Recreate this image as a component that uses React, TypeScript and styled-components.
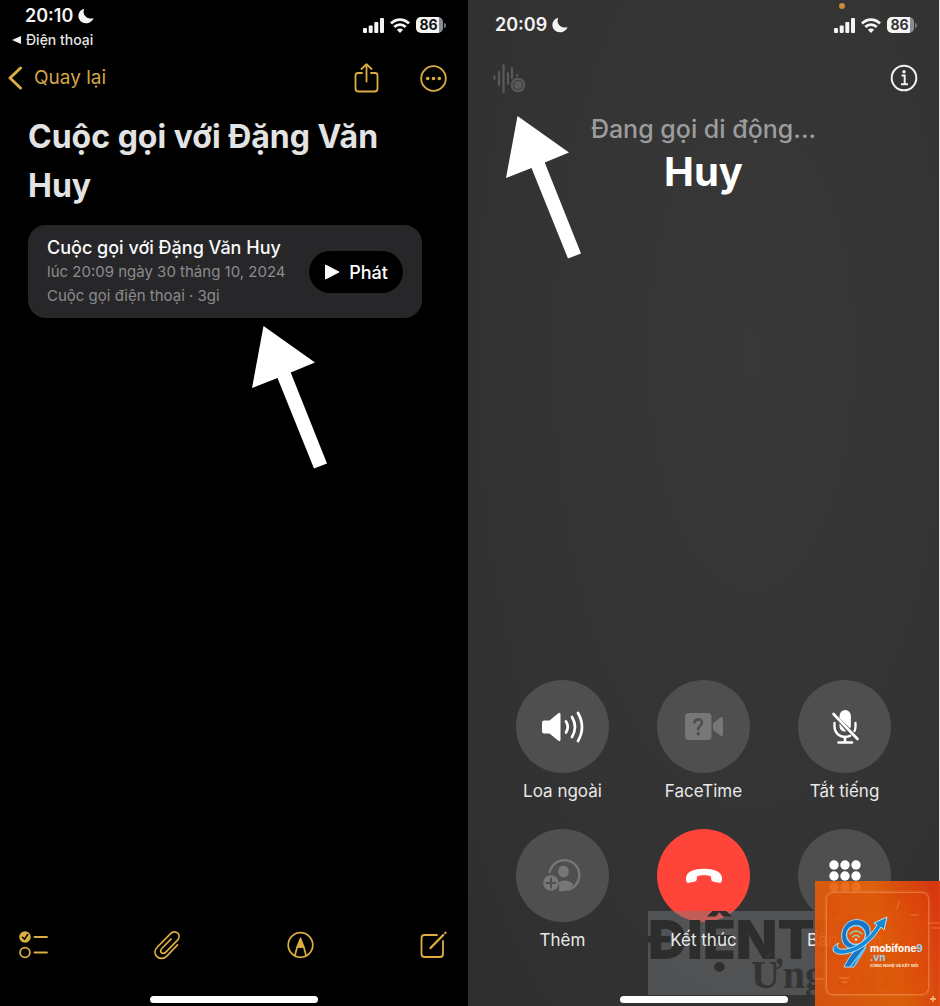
import React from "react";
import styled, { createGlobalStyle } from "styled-components";

const gold = "#dcae42";

const GlobalStyle = createGlobalStyle`
  * { box-sizing: border-box; }
  body { margin: 0; background: #e4e4e4; }
  h1, h2, p { margin: 0; }
  button { border: 0; padding: 0; background: none; font: inherit; color: inherit; cursor: pointer; }
  svg { display: block; flex: none; }
`;

const Page = styled.div`
  display: grid;
  grid-template-columns: 468fr 471fr;
  min-height: 100vh;
  padding-right: 1px;
  font-family: Inter, "Liberation Sans", sans-serif;
  color: #fff;
`;

const Screen = styled.main<{ $call?: boolean }>`
  position: relative;
  display: flex;
  flex-direction: column;
  min-width: 0;
  padding-bottom: 3px;
  background: ${(p) =>
    p.$call
      ? "radial-gradient(ellipse at 60% 35%, #383838 0%, #343434 50%, #2f2f2f 100%)"
      : "#000"};
`;

const StatusBar = styled.header<{ $inset: number }>`
  display: flex;
  justify-content: space-between;
  height: 50px;
  padding: 0 22px 0 ${(p) => p.$inset}px;
`;

const ClockColumn = styled.div<{ $top: number }>`
  display: flex;
  flex-direction: column;
  padding-top: ${(p) => p.$top}px;
`;

const Clock = styled.div<{ $inset: number }>`
  display: flex;
  align-items: center;
  gap: 5px;
  padding-left: ${(p) => p.$inset}px;
  font-size: 18px;
  line-height: 24px;
  font-weight: 600;
  color: #f2f2f2;
`;

const ReturnLink = styled.a`
  display: flex;
  align-items: center;
  gap: 5px;
  font-size: 14px;
  line-height: 24px;
  font-weight: 500;
  color: #e6e6e6;
  text-decoration: none;
`;

const Indicators = styled.div`
  display: flex;
  align-items: center;
  gap: 6px;
  height: 50px;
`;

const Battery = styled.span`
  display: flex;
  align-items: center;
  gap: 1px;
  &::after {
    content: "";
    width: 2px;
    height: 5px;
    border-radius: 0 2px 2px 0;
    background: #777;
  }
`;

const BatteryLevel = styled.span<{ $ink: string }>`
  width: 27px;
  height: 16px;
  padding-right: 2px;
  border-radius: 5px;
  background: linear-gradient(to right, #f4f4f4 86%, #8d8d8d 86%);
  color: ${(p) => p.$ink};
  font-size: 14px;
  line-height: 16px;
  font-weight: 700;
  text-align: center;
`;

const MicDot = styled.span`
  position: absolute;
  top: 3px;
  right: 94px;
  width: 6px;
  height: 6px;
  border-radius: 50%;
  background: #c98a3a;
`;

const NavBar = styled.nav<{ $left: number }>`
  display: flex;
  align-items: center;
  justify-content: space-between;
  height: 56px;
  padding: 0 21px 0 ${(p) => p.$left}px;
`;

const BackButton = styled.button`
  display: flex;
  align-items: center;
  gap: 11px;
  color: #d3a646;
  font-size: 19px;
  line-height: 28px;
`;

const Actions = styled.div`
  display: flex;
  align-items: center;
  gap: 41px;
`;

const IconButton = styled.button`
  position: relative;
  display: flex;
`;

const Note = styled.article`
  padding: 6px 46px 0 28px;
`;

const NoteTitle = styled.h1`
  font-size: 32px;
  line-height: 49px;
  font-weight: 700;
  color: #e3e3e3;
`;

const Recording = styled.section`
  position: relative;
  display: flex;
  align-items: center;
  justify-content: space-between;
  margin-top: 15px;
  padding: 11px 19px 10px;
  border-radius: 18px;
  background: #272729;
`;

const RecordingTitle = styled.h2`
  font-size: 18px;
  line-height: 24px;
  font-weight: 500;
  color: #fafafa;
  white-space: nowrap;
`;

const RecordingMeta = styled.p`
  font-size: 15px;
  line-height: 24px;
  color: #8b8b8e;
  white-space: nowrap;
`;

const PlayButton = styled.button`
  display: flex;
  flex: none;
  align-items: center;
  justify-content: center;
  gap: 9px;
  width: 94px;
  height: 42px;
  border-radius: 21px;
  background: #000;
  font-size: 18px;
  font-weight: 500;
`;

const ArrowSvg = styled.svg<{ $left: number; $top: number }>`
  position: absolute;
  left: ${(p) => p.$left}px;
  top: ${(p) => p.$top}px;
  pointer-events: none;
`;

const Toolbar = styled.footer`
  display: flex;
  align-items: center;
  justify-content: space-between;
  margin-top: auto;
  margin-bottom: 36px;
  padding: 0 21px 0 19px;
`;

const HomeBar = styled.div`
  position: relative;
  z-index: 2;
  align-self: center;
  width: 168px;
  height: 7px;
  border-radius: 4px;
  background: #fff;
`;

const Caller = styled.section`
  padding-top: 5px;
  text-align: center;
`;

const CallState = styled.p`
  font-size: 25px;
  line-height: 36px;
  font-weight: 500;
  color: #9c9c9c;
`;

const CallerName = styled.h1`
  font-size: 40px;
  line-height: 50px;
  font-weight: 700;
`;

const Controls = styled.section`
  display: grid;
  grid-template-columns: repeat(3, 93px);
  justify-content: space-between;
  row-gap: 26px;
  margin: auto 0 44px;
  padding: 0 48px;
`;

const Control = styled.button`
  display: flex;
  flex-direction: column;
  align-items: center;
  gap: 6px;
`;

const Disc = styled.span<{ $danger?: boolean }>`
  display: flex;
  align-items: center;
  justify-content: center;
  width: 93px;
  height: 93px;
  border-radius: 50%;
  background: ${(p) => (p.$danger ? "#ff453a" : "#4f4f4f")};
`;

const ControlLabel = styled.span`
  position: relative;
  z-index: 2;
  font-size: 17px;
  line-height: 24px;
  color: #e8e8e8;
  white-space: nowrap;
`;

const Watermark = styled.aside`
  position: absolute;
  right: 0;
  bottom: 11px;
  width: 291px;
  height: 84px;
  overflow: hidden;
  background: rgba(120, 122, 124, 0.45);
  color: #2d2d2d;
  white-space: nowrap;
`;

const WatermarkName = styled.div`
  font-size: 54px;
  line-height: 58px;
  font-weight: 900;
`;

const WatermarkTopic = styled.div`
  margin-top: -16px;
  padding-left: 103px;
  font-family: "Liberation Serif", serif;
  font-size: 40px;
  line-height: 44px;
  font-weight: 700;
  color: #333;
`;

const Sponsor = styled.aside`
  position: absolute;
  z-index: 3;
  right: -1px;
  bottom: 0;
  width: 125px;
  height: 125px;
  padding: 11px;
  background: linear-gradient(75deg, rgba(224, 84, 14, 0.93), rgba(234, 100, 4, 0.9) 55%, rgba(222, 56, 14, 0.96) 95%);
`;

const SponsorFrame = styled.div`
  height: 103px;
  padding: 51px 0 0 43px;
  border: 1px solid rgba(255, 180, 120, 0.4);
  border-radius: 7px;
  background: rgba(230, 74, 8, 0.3);
  box-shadow: 0 0 3px rgba(255, 190, 130, 0.4);
  white-space: nowrap;
`;

const SponsorName = styled.div`
  font-size: 10px;
  line-height: 9px;
  font-weight: 700;
  color: #fff;
`;

const Tint = styled.span`
  color: #9fd4f2;
`;

const SponsorTagline = styled.div`
  font-size: 4px;
  line-height: 7px;
  font-weight: 700;
  color: #ffe9da;
`;

const SponsorArt = styled.svg`
  position: absolute;
  left: 0;
  top: 0;
`;

const Moon = () => (
  <svg width="16" height="16" viewBox="0 0 16 16" fill="#f4f4f4" aria-hidden="true">
    <path d="M6.200 .8C2.700 1.800 .4 4.700 .4 8.100C.4 12.200 3.800 15.300 8 15.300C11.500 15.300 14.500 13.200 15.600 10C9.500 12.200 3.600 7.200 6.200 .8Z" />
  </svg>
);

const PointerArrow = ({ left, top }: { left: number; top: number }) => (
  <ArrowSvg $left={left} $top={top} width="76" height="143" viewBox="0 0 76 143" aria-hidden="true">
    <path d="M11.500 0L63 36.500L38.700 46.500L75 137.500L62 142.500L25.500 52L0 62Z" fill="#fff" />
  </ArrowSvg>
);

const SystemIndicators = ({ ink }: { ink: string }) => (
  <Indicators>
    <svg width="21" height="15" viewBox="0 0 21 15" fill="#f4f4f4" aria-hidden="true">
      <rect x="0" y="10" width="4" height="5" rx="1" />
      <rect x="5.700" y="7.500" width="4" height="7.500" rx="1" />
      <rect x="11.300" y="4" width="4" height="11" rx="1" />
      <rect x="17" y="0" width="4" height="15" rx="1" />
    </svg>
    <svg width="20" height="15" viewBox="0 0 20 15" aria-hidden="true">
      <g fill="none" stroke="#f4f4f4" strokeWidth="2.800">
        <path d="M1 5.500C6 .2 14 .2 19 5.500" />
        <path d="M4.300 9C7.500 5.700 12.500 5.700 15.700 9" />
      </g>
      <path d="M10 15L6.900 11.700C8.700 10 11.300 10 13.100 11.700Z" fill="#f4f4f4" />
    </svg>
    <Battery>
      <BatteryLevel $ink={ink}>86</BatteryLevel>
    </Battery>
  </Indicators>
);

const NotesScreen = () => (
  <Screen>
    <StatusBar $inset={12}>
      <ClockColumn $top={4}>
        <Clock $inset={13}>
          20:10 <Moon />
        </Clock>
        <ReturnLink href="#phone">
          <svg width="9" height="8" viewBox="0 0 9 8" fill="#f0f0f0" aria-hidden="true">
            <path d="M0 4L9 0V8Z" />
          </svg>
          Điện thoại
        </ReturnLink>
      </ClockColumn>
      <SystemIndicators ink="#111" />
    </StatusBar>
    <NavBar $left={8}>
      <BackButton>
        <svg width="15" height="24" viewBox="0 0 15 24" fill="none" stroke={gold} strokeWidth="3" strokeLinecap="round" strokeLinejoin="round" aria-hidden="true">
          <path d="M12.500 2L2 12L12.500 22" />
        </svg>
        Quay lại
      </BackButton>
      <Actions>
        <IconButton aria-label="Chia sẻ">
          <svg width="25" height="30" viewBox="0 0 25 30" fill="none" stroke={gold} strokeWidth="1.800" strokeLinecap="round" strokeLinejoin="round">
            <path d="M8 10H4Q1.500 10 1.500 12.500V25.500Q1.500 28.500 4.500 28.500H20.500Q23.500 28.500 23.500 25.500V12.500Q23.500 10 21 10H17" />
            <path d="M12.500 18.500V1.500M7.500 6L12.500 1.200L17.500 6" />
          </svg>
        </IconButton>
        <IconButton aria-label="Tùy chọn khác">
          <svg width="27" height="27" viewBox="0 0 27 27" fill="none" stroke={gold} strokeWidth="1.800">
            <circle cx="13.500" cy="13.500" r="12.300" />
            <g fill={gold} stroke="none">
              <circle cx="7.700" cy="13.500" r="1.800" />
              <circle cx="13.500" cy="13.500" r="1.800" />
              <circle cx="19.300" cy="13.500" r="1.800" />
            </g>
          </svg>
        </IconButton>
      </Actions>
    </NavBar>
    <Note>
      <NoteTitle>Cuộc gọi với Đặng Văn Huy</NoteTitle>
      <Recording>
        <div>
          <RecordingTitle>Cuộc gọi với Đặng Văn Huy</RecordingTitle>
          <RecordingMeta>lúc 20:09 ngày 30 tháng 10, 2024</RecordingMeta>
          <RecordingMeta>Cuộc gọi điện thoại · 3gi</RecordingMeta>
        </div>
        <PlayButton>
          <svg width="16" height="16" viewBox="0 0 16 16" fill="#fff" stroke="#fff" strokeWidth="1" strokeLinejoin="round" aria-hidden="true">
            <path d="M1.500 1L15 8L1.500 15Z" />
          </svg>
          Phát
        </PlayButton>
        <PointerArrow left={224} top={101} />
      </Recording>
    </Note>
    <Toolbar>
      <IconButton aria-label="Danh sách kiểm">
        <svg width="29" height="30" viewBox="0 0 29 30" fill="none" stroke={gold} strokeWidth="1.800" strokeLinecap="round">
          <circle cx="6" cy="7" r="5.800" fill={gold} stroke="none" />
          <path d="M3.500 7.200L5.500 9.200L8.700 4.500" stroke="#000" strokeWidth="1.500" />
          <circle cx="6" cy="22.500" r="4.900" />
          <path d="M15.500 7H28M15.500 22.500H28" />
        </svg>
      </IconButton>
      <IconButton aria-label="Đính kèm">
        <svg width="26" height="30" viewBox="0 0 26 30" fill="none" stroke={gold} strokeWidth="1.700" strokeLinecap="round">
          <path d="M23.500 14.800L13 25.800C9.800 29.200 5.200 29.200 2.700 26.400C.2 23.600 .7 19.800 3.400 17L16.600 3.600C18.800 1.400 21.900 1.300 23.800 3.200C25.700 5.100 25.500 8 23.500 10.100L11.600 22.300C10.300 23.600 8.500 23.700 7.400 22.600C6.300 21.500 6.500 19.800 7.800 18.500L17 9.100" />
        </svg>
      </IconButton>
      <IconButton aria-label="Đánh dấu">
        <svg width="27" height="28" viewBox="0 0 27 28" fill="none" stroke={gold} strokeWidth="1.700" strokeLinejoin="round">
          <circle cx="13.500" cy="14" r="12.300" />
          <path d="M7.800 25L10.200 16H16.800L19.200 25" />
          <path d="M10.200 16L13.500 7.500L16.800 16Z" fill={gold} />
        </svg>
      </IconButton>
      <IconButton aria-label="Ghi chú mới">
        <svg width="27" height="28" viewBox="0 0 27 28" fill="none" stroke={gold} strokeWidth="1.800" strokeLinecap="round">
          <path d="M17 4H4.500Q1.500 4 1.500 7V23Q1.500 26 4.500 26H20Q23 26 23 23V10" />
          <path d="M10.500 17L23.300 4" strokeWidth="2.300" />
          <path d="M25.300 2L25.500 1.800" strokeWidth="2.300" />
        </svg>
      </IconButton>
    </Toolbar>
    <HomeBar />
  </Screen>
);

const SpeakerIcon = () => (
  <svg width="44" height="34" viewBox="0 0 44 34" aria-hidden="true">
    <path d="M1 12.500Q1 10.500 3 10.500H8.500L17 3.500Q19.500 1.800 19.500 4.500V29.500Q19.500 32.200 17 30.500L8.500 23.500H3Q1 23.500 1 21.500Z" fill="#fff" />
    <g fill="none" stroke="#fff" strokeWidth="2.700" strokeLinecap="round">
      <path d="M25 11.500Q28.500 17 25 22.500" />
      <path d="M31 7Q37 17 31 27" />
      <path d="M37 3Q45 17 37 31" />
    </g>
  </svg>
);

const FaceTimeIcon = () => (
  <svg width="40" height="27" viewBox="0 0 40 27" aria-hidden="true">
    <rect x="1" y="0" width="26.500" height="27" rx="4" fill="#777" />
    <path d="M29 10.500L36.500 4.500Q39 3 39 5.500V21.500Q39 24 36.500 22.500L29 17Z" fill="#777" />
    <path d="M10.500 9.500C11 5.500 18 5 18 9.700C18 13 14.200 12.700 14.200 16.500" fill="none" stroke="#4f4f4f" strokeWidth="2.600" strokeLinecap="round" />
    <circle cx="14.200" cy="20.800" r="1.700" fill="#4f4f4f" />
  </svg>
);

const MutedIcon = () => (
  <svg width="30" height="36" viewBox="0 0 30 36" fill="none" stroke="#fff" strokeWidth="2.300" strokeLinecap="round" aria-hidden="true">
    <path d="M9.500 7A5.700 6 0 0 1 20.900 7V17Q20.900 18.500 20 19.300L9.500 9Z" fill="#fff" stroke="none" />
    <path d="M9.500 14.500V17C9.500 21 12.700 23.300 16.300 22.300Z" fill="#fff" stroke="none" />
    <path d="M4.500 14V17.500C4.500 24 9.300 28 15 28C17 28 18.700 27.500 20.200 26.700M25.500 14V17.500Q25.500 20 24.500 22" />
    <path d="M15 28V33M8.500 33.500H22" strokeWidth="2.600" />
    <path d="M3.500 5L27.500 30" strokeWidth="2.600" />
  </svg>
);

const AddPersonIcon = () => (
  <svg width="40" height="34" viewBox="2.500 0 40 34" aria-hidden="true">
    <path d="M9 14A15 15 0 1 1 26 31" fill="none" stroke="#777" strokeWidth="2.300" />
    <ellipse cx="23" cy="12.500" rx="5.300" ry="6" fill="#777" />
    <path d="M18 32C19 29.500 19 26 18 23.500C21 20.500 29 20.500 33 25.500C29.500 31 23 33 18 32Z" fill="#777" />
    <circle cx="10.500" cy="24" r="7.800" fill="#777" />
    <path d="M10.500 19.500V28.500M6 24H15" stroke="#4f4f4f" strokeWidth="2" strokeLinecap="round" />
  </svg>
);

const HangUpIcon = () => (
  <svg width="38" height="16" viewBox="0 0 38 16" fill="#fff" aria-hidden="true">
    <path d="M1 10.500C1 3.500 9.500 .8 19 .8C28.500 .8 37 3.500 37 10.500C37 14 36.500 15 34 14.700L28.500 13.700C26.800 13.300 26.400 12.500 26.200 11L26 8.500C23.500 6.800 14.500 6.800 12 8.500L11.800 11C11.600 12.500 11.200 13.300 9.500 13.700L4 14.700C1.500 15 1 14 1 10.500Z" />
  </svg>
);

const KeypadIcon = () => (
  <svg width="32" height="32" viewBox="0 0 32 32" fill="#fff" aria-hidden="true">
    {[5, 16, 27].map((y) => [5, 16, 27].map((x) => <circle key={`${x}-${y}`} cx={x} cy={y} r="4.700" />))}
  </svg>
);

const controls = [
  { label: "Loa ngoài", icon: <SpeakerIcon /> },
  { label: "FaceTime", icon: <FaceTimeIcon /> },
  { label: "Tắt tiếng", icon: <MutedIcon /> },
  { label: "Thêm", icon: <AddPersonIcon /> },
  { label: "Kết thúc", icon: <HangUpIcon />, danger: true },
  { label: "Bàn phím", icon: <KeypadIcon /> },
];

const SponsorBadge = () => (
  <Sponsor>
    <SponsorArt width="125" height="125" viewBox="0 0 125 125" aria-hidden="true">
      <g stroke="#ff9a4a" strokeLinecap="round" opacity=".6">
        <path d="M96 34H103M113 42H124M117 47H125M24 97H34M27 101H32M0 98H9M82 28L84 20" />
      </g>
      <path d="M118 115V121M115 118H121" stroke="#ffc09a" strokeWidth="1.300" />
      <path d="M55 48C57 58 47 70 39 86H29C33 77 39 70 43 67C31 70 25 62 27 51C29 42 37 37 45 39C50 40 54 43 55 48Z" fill="#1674c4" stroke="#a8dcf5" strokeWidth="1" />
      <path d="M48 69L35 86M51 66L40 84" stroke="#6cc3f0" strokeWidth="1.500" />
      <circle cx="41" cy="54" r="9.500" fill="#e9540f" stroke="#8fd4f5" strokeWidth="1.500" />
      <g fill="none" stroke="#8fd4a8" strokeWidth="1.300" strokeLinecap="round">
        <path d="M35 53Q41 47 47 53M37.500 56Q41 52.500 44.500 56" />
      </g>
      <circle cx="41" cy="58.500" r="1.300" fill="#bff0dc" />
      <path d="M24 62C14 66 17 75 30 73C46 71 59 58 66 46L69 49L72 36L59 42L62 44C54 57 43 66 31 68C23 69 20 66 24 62Z" fill="#168ad4" stroke="#b5e4f8" strokeWidth="1" strokeLinejoin="round" />
    </SponsorArt>
    <SponsorFrame>
      <SponsorName>
        mobifone<Tint>9</Tint>
      </SponsorName>
      <SponsorName>
        <Tint>.vn</Tint>
      </SponsorName>
      <SponsorTagline>CÔNG NGHỆ VÀ KẾT NỐI</SponsorTagline>
    </SponsorFrame>
  </Sponsor>
);

const CallScreen = () => (
  <Screen $call>
    <MicDot />
    <StatusBar $inset={27}>
      <ClockColumn $top={13}>
        <Clock $inset={0}>
          20:09 <Moon />
        </Clock>
      </ClockColumn>
      <SystemIndicators ink="#333" />
    </StatusBar>
    <NavBar $left={25}>
      <IconButton aria-label="Ghi âm cuộc gọi">
        <svg width="34" height="30" viewBox="0 -4 34 30" fill="none" stroke="#595959" strokeWidth="2.200" strokeLinecap="round">
          <path d="M1.500 9V12M6 5V18M10.500 -2V25M15 6V17M19 1V11M24 8V9" />
          <circle cx="25" cy="18" r="7.300" fill="#595959" stroke="none" />
          <circle cx="25" cy="18" r="4.500" stroke="#3b3b3b" strokeWidth="1.200" />
        </svg>
        <PointerArrow left={13} top={53} />
      </IconButton>
      <IconButton aria-label="Thông tin">
        <svg width="28" height="28" viewBox="0 0 28 28" fill="none" stroke="#f0f0f0" strokeWidth="2">
          <circle cx="14" cy="14" r="12.300" />
          <path d="M11.500 11.500H14.700V20M11 20.200H18" />
          <circle cx="14" cy="7.700" r="1.700" fill="#f0f0f0" stroke="none" />
        </svg>
      </IconButton>
    </NavBar>
    <Caller>
      <CallState>Đang gọi di động...</CallState>
      <CallerName>Huy</CallerName>
    </Caller>
    <Controls>
      {controls.map((c) => (
        <Control key={c.label}>
          <Disc $danger={c.danger}>{c.icon}</Disc>
          <ControlLabel>{c.label}</ControlLabel>
        </Control>
      ))}
    </Controls>
    <HomeBar />
    <Watermark>
      <WatermarkName>ĐIỆNTỬ</WatermarkName>
      <WatermarkTopic>Ứng dụng</WatermarkTopic>
    </Watermark>
    <SponsorBadge />
  </Screen>
);

export default function App() {
  return (
    <>
      <GlobalStyle />
      <Page>
        <NotesScreen />
        <CallScreen />
      </Page>
    </>
  );
}
